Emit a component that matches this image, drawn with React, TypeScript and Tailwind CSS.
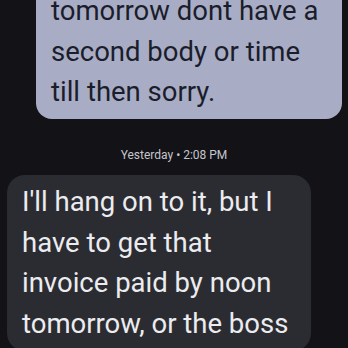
export default function App() {
  return (
    <div
      className="h-[348px] w-[348px] overflow-hidden bg-[#121217]"
      style={{ fontFamily: "Roboto, 'Noto Sans', sans-serif" }}
    >
      {/* outgoing message */}
      <div className="ml-[36px] mt-[-16px] w-[306px] rounded-[16px] bg-[#a8adc5] pl-[15px] pt-[7px] pb-[6.5px] text-[27.5px] leading-[40.5px] text-[#1b1d2b]">
        tomorrow dont have a
        <br />
        second body or time
        <br />
        till then sorry.
      </div>

      {/* timestamp */}
      <div className="mt-[27px] text-center text-[12px] leading-[18px] text-[#c5c6cd]">
        Yesterday • 2:08 PM
      </div>

      {/* incoming message */}
      <div className="ml-[7px] mt-[11px] w-[304px] rounded-[18px] bg-[#2b2c31] pl-[15px] pt-[7px] pb-[7px] text-[27.5px] leading-[40.5px] text-[#ececf0]">
        I'll hang on to it, but I
        <br />
        have to get that
        <br />
        invoice paid by noon
        <br />
        tomorrow, or the boss
      </div>
    </div>
  );
}
